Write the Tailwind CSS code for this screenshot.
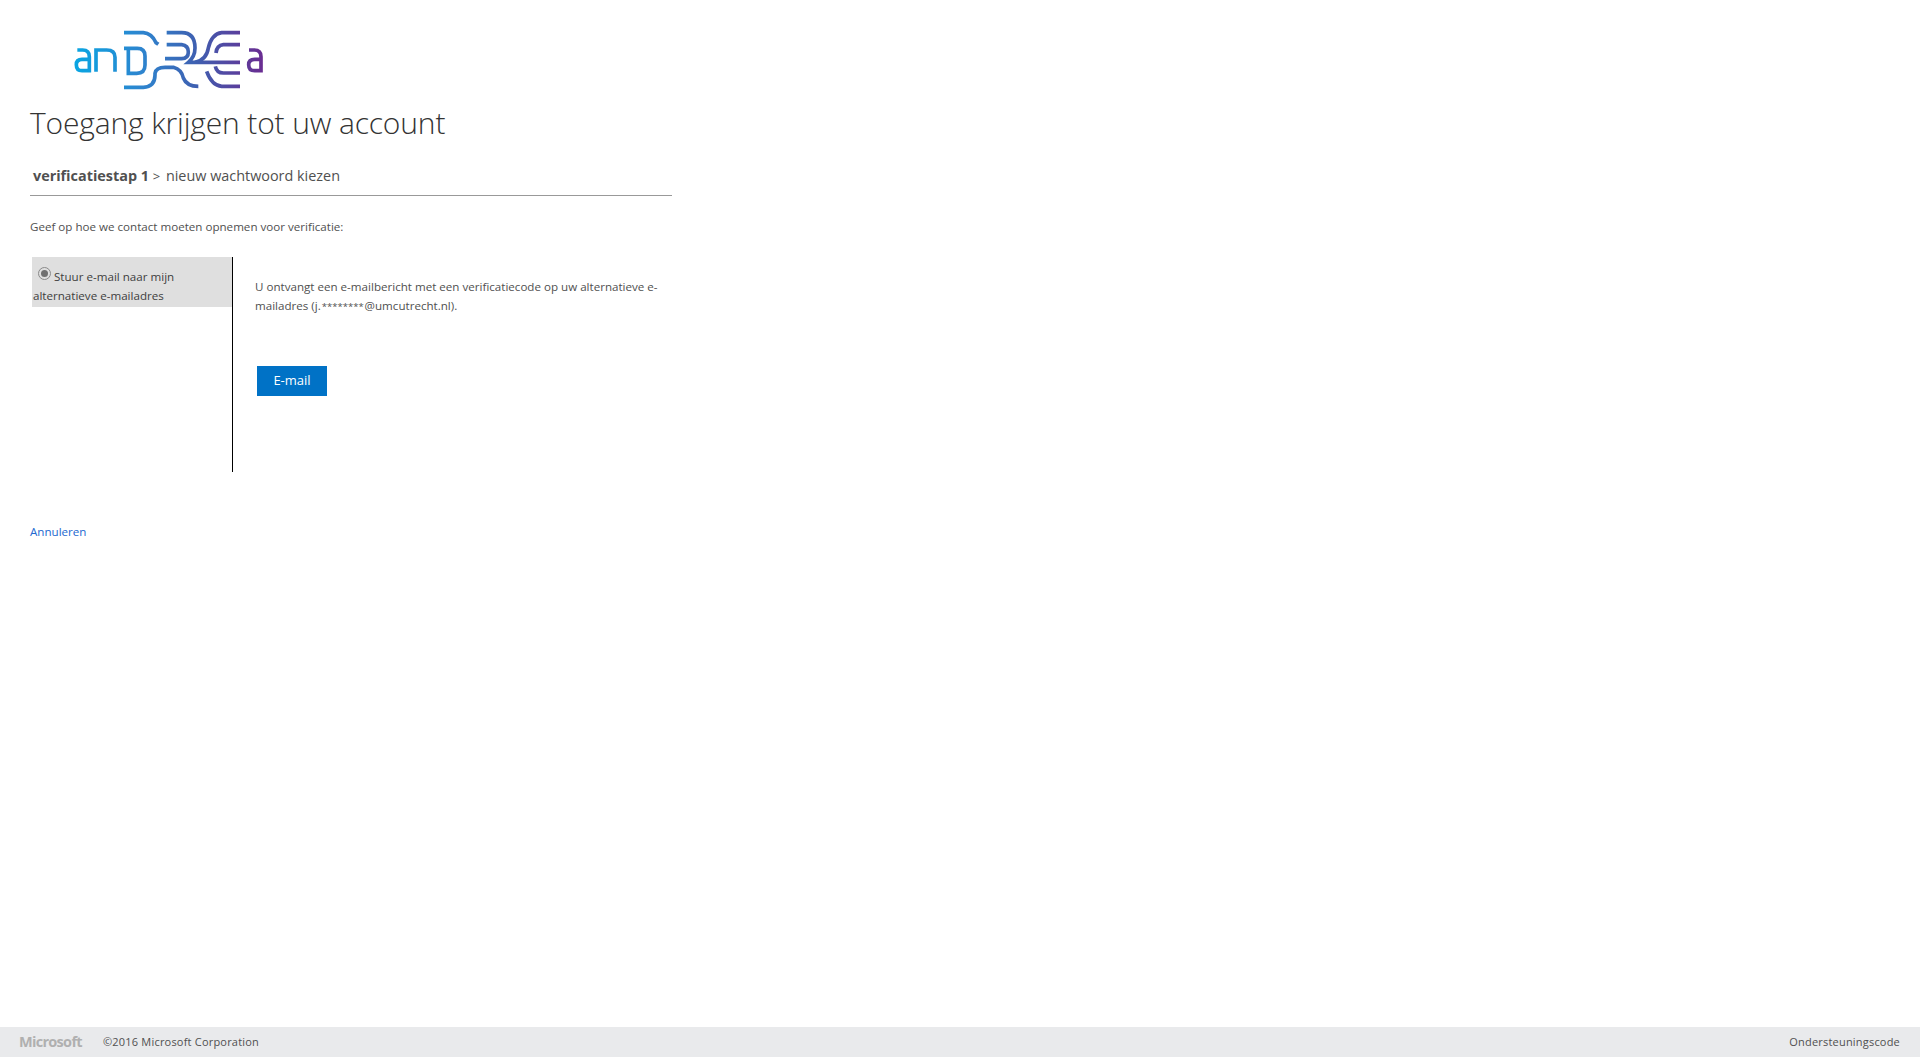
<!DOCTYPE html>
<html lang="nl">

<head>
    <meta charset="UTF-8" />
    <title>Toegang krijgen tot uw account</title>
    <script src="https://cdn.jsdelivr.net/npm/@tailwindcss/browser@4"></script>
</head>

<body class="bg-white font-['Open_Sans',sans-serif] text-[#505050]">
    <div class="flex flex-col h-[1057px] overflow-hidden">
        <main class="flex-1 pl-[30px]">
            <!-- logo -->
            <svg class="block ml-[30px] mt-[20px]" width="220" height="80" viewBox="0 0 660 240" fill="none" stroke="url(#logoGrad)" stroke-width="11">
                <defs>
                    <linearGradient id="logoGrad" gradientUnits="userSpaceOnUse" x1="45" y1="0" x2="610" y2="0">
                        <stop offset="0" stop-color="#0aa5e2" />
                        <stop offset="0.35" stop-color="#2d85cf" />
                        <stop offset="0.65" stop-color="#3f5fb0" />
                        <stop offset="1" stop-color="#6a2c91" />
                    </linearGradient>
                </defs>
                <path d="M52 90 H68 Q88 90 88 110 V152 H66 Q49 152 49 134 Q49 118 66 118 H88" />
                <path d="M108 155 V90 H140 Q165 90 165 112 V155" />
                <path d="M192 38 H250 Q275 40 288 68 L295 73" />
                <path d="M192 85 H232 Q255 85 255 108 V135 Q255 160 230 160 H205 V85" />
                <path d="M192 202 H250 Q285 200 285 165 V160 Q288 142 315 142 H340 Q365 149 370 174 Q380 199 415 199" />
                <path d="M320 38 H365 Q405 38 405 84 Q405 110 385 127 H540" />
                <path d="M320 74 H365 Q385 76 385 96 Q385 116 365 116 H315" />
                <path d="M540 38 H485 Q455 42 445 84 Q440 119 405 127" />
                <path d="M540 199 H485 Q455 196 440 154" />
                <path d="M540 74 H490 Q470 76 468 99" />
                <path d="M540 159 H490 Q470 159 466 139" />
                <path d="M567 90 H583 Q603 90 603 110 V152 H584 Q566 152 566 134 Q566 118 584 118 H603" />
            </svg>

            <h1 class="mt-[3px] text-[30px] leading-[40px] font-light tracking-[-0.15px] text-[#333]">Toegang krijgen tot uw account</h1>

            <div class="w-[642px] mt-[14px] h-[39px] border-b border-[#999] pl-[3px] text-[14.4px] leading-[37px]">
                <span class="font-bold text-[#505050]">verificatiestap 1</span> <span class="text-[13px] mr-[2px]">&gt;</span> nieuw wachtwoord kiezen
            </div>

            <p class="mt-[21px] text-[11.6px] leading-[20px]">Geef op hoe we contact moeten opnemen voor verificatie:</p>

            <div class="flex mt-[20px] h-[215px] ml-[2px]">
                <div class="w-[200px]">
                    <div class="h-[50px] bg-[#dfdfdf] pl-[1px] pt-[10px] text-[11.6px] leading-[19px] text-[#404040]">
                        <span class="inline-block w-[13px] h-[13px] ml-[5px] mr-[3px] rounded-full border border-[#8a8a8a] bg-[#dfdfdf] p-[2px] align-[1px]">
                            <span class="block w-full h-full rounded-full bg-[#707070]"></span>
                        </span>Stuur e-mail naar mijn<br>alternatieve e-mailadres
                    </div>
                </div>
                <div class="w-px bg-black"></div>
                <div class="w-[435px] pl-[22px]">
                    <p class="pt-[20px] text-[11.6px] leading-[19px]">U ontvangt een e-mailbericht met een verificatiecode op uw alternatieve e-mailadres (j.<span class="text-[9.5px] mx-px">********</span>@umcutrecht.nl).</p>
                    <button class="block mt-[50px] ml-[2px] w-[70px] h-[30px] bg-[#0072c6] text-white text-[13px] font-medium">E-mail</button>
                </div>
            </div>

            <a href="#" class="block mt-[50px] text-[11.6px] leading-[20px] text-[#2268d0]">Annuleren</a>
        </main>

        <footer class="h-[30px] bg-[#e9eaec] flex items-center text-[11px] tracking-[0.2px]">
            <span class="ml-[19px] w-[84px] text-[14.5px] font-bold tracking-[-0.7px] text-[#b0b0b0]">Microsoft</span>
            <span class="text-[#505050]">©2016 Microsoft Corporation</span>
            <span class="ml-auto mr-[20px] text-[#505050]">Ondersteuningscode</span>
        </footer>
    </div>
</body>

</html>
